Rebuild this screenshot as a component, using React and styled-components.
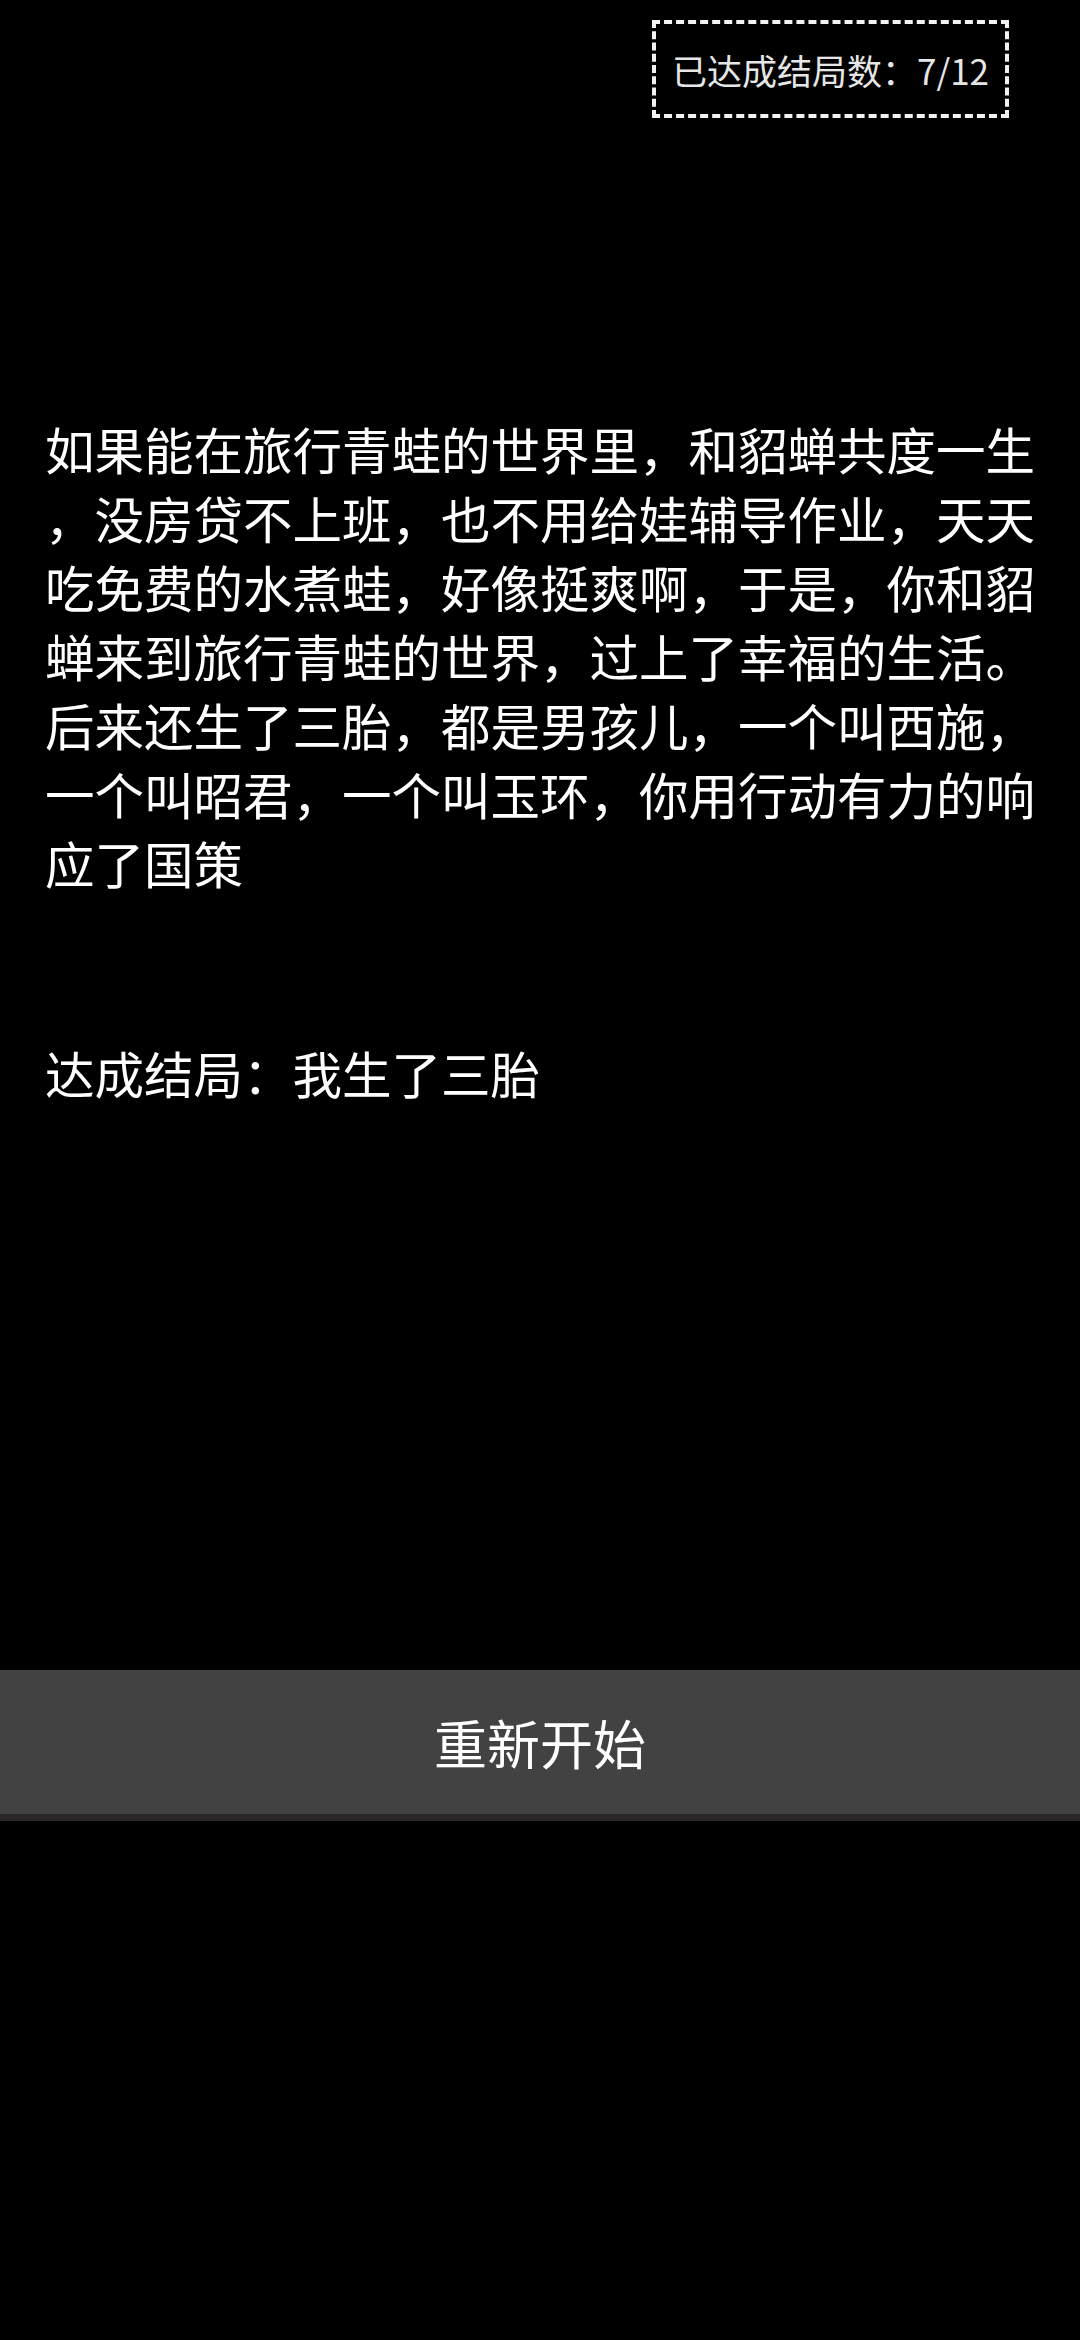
import React from "react";
import styled, { createGlobalStyle } from "styled-components";

const GlobalStyle = createGlobalStyle`
  html, body {
    margin: 0;
    padding: 0;
    background: #000;
  }
  body {
    font-family: "Noto Sans CJK SC", "Noto Sans", sans-serif;
    color: #fff;
  }
`;

const Page = styled.div`
  width: 1080px;
  min-height: 2340px;
  background: #000;
  display: flex;
  flex-direction: column;
`;

const Header = styled.div`
  display: flex;
  justify-content: flex-end;
  padding: 20px 71px 0 0;
`;

const Badge = styled.div`
  box-sizing: border-box;
  height: 98px;
  padding: 0 16px;
  border: 4px dashed #f2f2f2;
  display: flex;
  align-items: center;
  font-size: 35px;
  color: #e6e6e6;
  white-space: nowrap;
`;

const Story = styled.div`
  margin-top: 296px;
  padding: 0 45px;
  font-size: 49.5px;
  line-height: 69px;
  color: #fff;
`;

const Line = styled.div`
  white-space: nowrap;
`;

const Ending = styled.div`
  margin-top: ${(p) => p.$gap}px;
`;

const RestartButton = styled.button`
  margin-top: 563px;
  width: 100%;
  height: 151px;
  box-sizing: border-box;
  border: none;
  border-bottom: 7px solid #2b2627;
  background: #424242;
  color: #fff;
  font-family: "Noto Sans CJK SC", "Noto Sans", sans-serif;
  font-size: 53px;
  padding: 0;
  display: flex;
  align-items: center;
  justify-content: center;
`;

const lines = [
  "如果能在旅行青蛙的世界里，和貂蝉共度一生",
  "，没房贷不上班，也不用给娃辅导作业，天天",
  "吃免费的水煮蛙，好像挺爽啊，于是，你和貂",
  "蝉来到旅行青蛙的世界，过上了幸福的生活。",
  "后来还生了三胎，都是男孩儿，一个叫西施，",
  "一个叫昭君，一个叫玉环，你用行动有力的响",
  "应了国策",
];

export default function App() {
  return (
    <>
      <GlobalStyle />
      <Page>
        <Header>
          <Badge>已达成结局数：7/12</Badge>
        </Header>
        <Story>
          {lines.map((l, i) => (
            <Line key={i}>{l}</Line>
          ))}
          <Ending $gap={141}>达成结局：我生了三胎</Ending>
        </Story>
        <RestartButton>重新开始</RestartButton>
      </Page>
    </>
  );
}
